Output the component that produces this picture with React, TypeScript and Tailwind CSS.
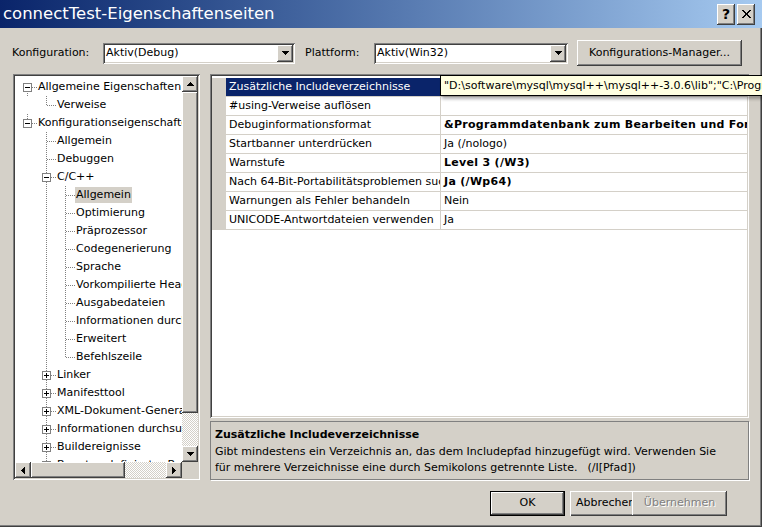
import React from "react";

const raised =
  "shadow-[inset_-1px_-1px_#404040,inset_1px_1px_#ffffff,inset_-2px_-2px_#808080,inset_2px_2px_#d4d0c8]";
const sunken =
  "shadow-[inset_1px_1px_#808080,inset_-1px_-1px_#ffffff,inset_2px_2px_#404040,inset_-2px_-2px_#d4d0c8]";
const checker =
  "bg-[image:repeating-conic-gradient(#d4d0c8_0%_25%,#ffffff_0%_50%)] bg-[length:2px_2px]";

type Dir = "up" | "down" | "left" | "right";

function Tri({ dir }: { dir: Dir }) {
  const paths: Record<Dir, string> = {
    up: "M3 0h1v1H3zM2 1h3v1H2zM1 2h5v1H1zM0 3h7v1H0z",
    down: "M0 0h7v1H0zM1 1h5v1H1zM2 2h3v1H2zM3 3h1v1H3z",
    left: "M0 3h1v1H0zM1 2h1v3H1zM2 1h1v5H2zM3 0h1v7H3z",
    right: "M0 0h1v7H0zM1 1h1v5H1zM2 2h1v3H2zM3 3h1v1H3z",
  };
  const vertical = dir === "up" || dir === "down";
  return (
    <svg
      width={vertical ? 7 : 4}
      height={vertical ? 4 : 7}
      shapeRendering="crispEdges"
    >
      <path d={paths[dir]} fill="#000" />
    </svg>
  );
}

function ScrollBtn({ dir }: { dir: Dir }) {
  return (
    <div
      className={`flex h-[16px] w-[16px] shrink-0 items-center justify-center bg-[#d4d0c8] ${raised}`}
    >
      <Tri dir={dir} />
    </div>
  );
}

type TreeRow = {
  l: number;
  t: string;
  box?: "-" | "+";
  own: "full" | "top" | "bottom";
  v?: number[];
  sel?: boolean;
};

const tree: TreeRow[] = [
  { l: 0, t: "Allgemeine Eigenschaften", box: "-", own: "bottom" },
  { l: 1, t: "Verweise", own: "top" },
  { l: 0, t: "Konfigurationseigenschaften", box: "-", own: "top" },
  { l: 1, t: "Allgemein", own: "full" },
  { l: 1, t: "Debuggen", own: "full" },
  { l: 1, t: "C/C++", box: "-", own: "full" },
  { l: 2, t: "Allgemein", own: "full", v: [1], sel: true },
  { l: 2, t: "Optimierung", own: "full", v: [1] },
  { l: 2, t: "Präprozessor", own: "full", v: [1] },
  { l: 2, t: "Codegenerierung", own: "full", v: [1] },
  { l: 2, t: "Sprache", own: "full", v: [1] },
  { l: 2, t: "Vorkompilierte Header", own: "full", v: [1] },
  { l: 2, t: "Ausgabedateien", own: "full", v: [1] },
  { l: 2, t: "Informationen durchsuchen", own: "full", v: [1] },
  { l: 2, t: "Erweitert", own: "full", v: [1] },
  { l: 2, t: "Befehlszeile", own: "top", v: [1] },
  { l: 1, t: "Linker", box: "+", own: "full" },
  { l: 1, t: "Manifesttool", box: "+", own: "full" },
  { l: 1, t: "XML-Dokument-Generator", box: "+", own: "full" },
  { l: 1, t: "Informationen durchsuchen", box: "+", own: "full" },
  { l: 1, t: "Buildereignisse", box: "+", own: "full" },
  { l: 1, t: "Benutzerdefinierter Buildschritt", box: "+", own: "full" },
];

const col = (l: number) => 12 + 19 * l;

function Gutter({ row }: { row: TreeRow }) {
  const w = 22 + 19 * row.l;
  const cx = col(row.l);
  return (
    <svg width={w} height={18} className="shrink-0" shapeRendering="crispEdges">
      {(row.v ?? []).map((l) => (
        <line
          key={l}
          x1={col(l) + 0.5}
          y1={0}
          x2={col(l) + 0.5}
          y2={18}
          stroke="#808080"
          strokeDasharray="1 1"
        />
      ))}
      <line
        x1={cx + 0.5}
        y1={row.own === "bottom" ? 9 : 0}
        x2={cx + 0.5}
        y2={row.own === "top" ? 10 : 18}
        stroke="#808080"
        strokeDasharray="1 1"
      />
      <line
        x1={cx + 1}
        y1={9.5}
        x2={w}
        y2={9.5}
        stroke="#808080"
        strokeDasharray="1 1"
      />
      {row.box && (
        <>
          <rect
            x={cx - 3.5}
            y={5.5}
            width={8}
            height={8}
            fill="#ffffff"
            stroke="#808080"
          />
          <line x1={cx - 2} y1={9.5} x2={cx + 3} y2={9.5} stroke="#000" />
          {row.box === "+" && (
            <line x1={cx + 0.5} y1={7} x2={cx + 0.5} y2={12} stroke="#000" />
          )}
        </>
      )}
    </svg>
  );
}

function Combo({ value, className }: { value: string; className: string }) {
  return (
    <div className={`flex h-[21px] items-center bg-white p-[2px] ${sunken} ${className}`}>
      <span className="flex-1 whitespace-nowrap pl-[1px]">{value}</span>
      <div
        className={`flex h-[17px] w-[16px] items-center justify-center bg-[#d4d0c8] ${raised}`}
      >
        <Tri dir="down" />
      </div>
    </div>
  );
}

type Prop = { name: string; value: string; bold?: boolean; sel?: boolean };

const props: Prop[] = [
  { name: "Zusätzliche Includeverzeichnisse", value: "", sel: true },
  { name: "#using-Verweise auflösen", value: "" },
  {
    name: "Debuginformationsformat",
    value: "&Programmdatenbank zum Bearbeiten und Fortfahren (/ZI)",
    bold: true,
  },
  { name: "Startbanner unterdrücken", value: "Ja (/nologo)" },
  { name: "Warnstufe", value: "Level 3 (/W3)", bold: true },
  {
    name: "Nach 64-Bit-Portabilitätsproblemen suchen",
    value: "Ja (/Wp64)",
    bold: true,
  },
  { name: "Warnungen als Fehler behandeln", value: "Nein" },
  { name: "UNICODE-Antwortdateien verwenden", value: "Ja" },
];

const includeDirs =
  '"D:\\software\\mysql\\mysql++\\mysql++-3.0.6\\lib";"C:\\Programme\\MySQL\\MySQL Server 5.0\\include"';

export default function App() {
  return (
    <div
      className={`relative flex h-[527px] w-[762px] flex-col overflow-hidden bg-[#d4d0c8] font-['DejaVu_Sans',sans-serif] text-[11px] text-black shadow-[inset_-1px_-1px_#404040,inset_-2px_-2px_#808080]`}
    >
      {/* title bar */}
      <div className="flex h-[28px] shrink-0 items-center bg-linear-to-r from-[#0a246a] to-[#a6caf0] pl-[3px] pr-[7px]">
        <span className="flex-1 text-[16.5px] text-white">
          connectTest-Eigenschaftenseiten
        </span>
        <div
          className={`flex h-[21px] w-[18px] items-center justify-center bg-[#d4d0c8] text-[14px] font-bold ${raised}`}
        >
          ?
        </div>
        <div
          className={`ml-[2px] flex h-[21px] w-[18px] items-center justify-center bg-[#d4d0c8] ${raised}`}
        >
          <svg width="9" height="8" shapeRendering="crispEdges">
            <path
              d="M0 0h2l2.5 3L7 0h2L5.5 4 9 8H7L4.5 5 2 8H0l3.5-4z"
              fill="#000"
            />
          </svg>
        </div>
      </div>

      {/* configuration row */}
      <div className="mb-[8px] mt-[12px] flex h-[26px] shrink-0 items-center pl-[12px]">
        <span className="w-[91px]">Konfiguration:</span>
        <Combo value="Aktiv(Debug)" className="w-[192px]" />
        <span className="ml-[10px] w-[69px]">Plattform:</span>
        <Combo value="Aktiv(Win32)" className="w-[194px]" />
        <div
          className={`ml-[9px] flex h-[26px] w-[165px] items-center justify-center bg-[#d4d0c8] ${raised}`}
        >
          Konfigurations-Manager...
        </div>
      </div>

      {/* main content */}
      <div className="flex h-[406px] shrink-0 gap-[10px] pl-[13px]">
        {/* tree */}
        <div className={`flex w-[187px] flex-col bg-white p-[2px] ${sunken}`}>
          <div className="flex h-[386px]">
            <div className="w-[167px] overflow-hidden pt-[2px]">
              {tree.map((row, i) => (
                <div key={i} className="flex h-[18px] items-center">
                  <Gutter row={row} />
                  <span
                    className={`whitespace-nowrap px-[1px] leading-[16px] ${
                      row.sel ? "bg-[#d4d0c8]" : ""
                    }`}
                  >
                    {row.t}
                  </span>
                </div>
              ))}
            </div>
            <div className="flex w-[16px] flex-col">
              <ScrollBtn dir="up" />
              <div className={`flex-1 bg-[#d4d0c8] ${raised}`} />
              <div className={`h-[33px] ${checker}`} />
              <ScrollBtn dir="down" />
            </div>
          </div>
          <div className="flex h-[16px]">
            <ScrollBtn dir="left" />
            <div className={`w-[94px] bg-[#d4d0c8] ${raised}`} />
            <div className={`flex-1 ${checker}`} />
            <ScrollBtn dir="right" />
            <div className="w-[16px] bg-[#d4d0c8]" />
          </div>
        </div>

        {/* property grid */}
        <div className="flex w-[539px] flex-col">
          <div className={`h-[344px] overflow-hidden bg-white p-[2px] ${sunken}`}>
            <div className="pt-[2px]">
              {props.map((p) => (
                <div
                  key={p.name}
                  className="flex h-[19px] border-b border-[#d4d0c8]"
                >
                  <div className="w-[14px] shrink-0 bg-[#d4d0c8]" />
                  <div
                    className={`w-[215px] shrink-0 overflow-hidden whitespace-nowrap border-r border-[#d4d0c8] pl-[3px] leading-[18px] ${
                      p.sel ? "bg-[#0a246a] text-white" : ""
                    }`}
                  >
                    {p.name}
                  </div>
                  <div
                    className={`flex-1 overflow-hidden whitespace-nowrap pl-[3px] leading-[18px] ${
                      p.bold ? "font-bold tracking-[0.3px]" : ""
                    }`}
                  >
                    {p.value}
                  </div>
                </div>
              ))}
            </div>
          </div>
          <div className="mt-[3px] h-[59px] border border-[#808080] bg-[#d4d0c8] px-[4px] pt-[3px] shadow-[1px_1px_0_#ffffff]">
            <div className="font-bold leading-[19px]">
              Zusätzliche Includeverzeichnisse
            </div>
            <div className="leading-[16px]">
              Gibt mindestens ein Verzeichnis an, das dem Includepfad hinzugefügt
              wird. Verwenden Sie
            </div>
            <div className="whitespace-nowrap leading-[16px]">
              für mehrere Verzeichnisse eine durch Semikolons getrennte Liste.
              <span className="ml-[10px]">(/I[Pfad])</span>
            </div>
          </div>
        </div>
      </div>

      {/* buttons */}
      <div className="flex justify-end pr-[35px] pt-[11px]">
        <div
          className={`flex h-[25px] w-[75px] items-center justify-center border border-black bg-[#d4d0c8] ${raised}`}
        >
          OK
        </div>
        <div className="ml-[5px] flex h-[25px] w-[62px] items-center overflow-hidden whitespace-nowrap bg-[#d4d0c8] pl-[6px] shadow-[inset_1px_1px_#ffffff,inset_0_-1px_#404040,inset_0_-2px_#808080]">
          Abbrechen
        </div>
        <div
          className={`flex h-[25px] w-[95px] items-center justify-center bg-[#d4d0c8] text-[#808080] [text-shadow:1px_1px_0_#ffffff] ${raised}`}
        >
          Übernehmen
        </div>
      </div>

      {/* in-place tooltip over the selected value */}
      <div className="absolute left-[440px] top-[75px] h-[21px] w-[420px] whitespace-nowrap border border-black bg-[#ffffe1] pl-[3px] leading-[19px] shadow-[2px_3px_3px_rgba(0,0,0,0.3)]">
        {includeDirs}
      </div>
    </div>
  );
}
